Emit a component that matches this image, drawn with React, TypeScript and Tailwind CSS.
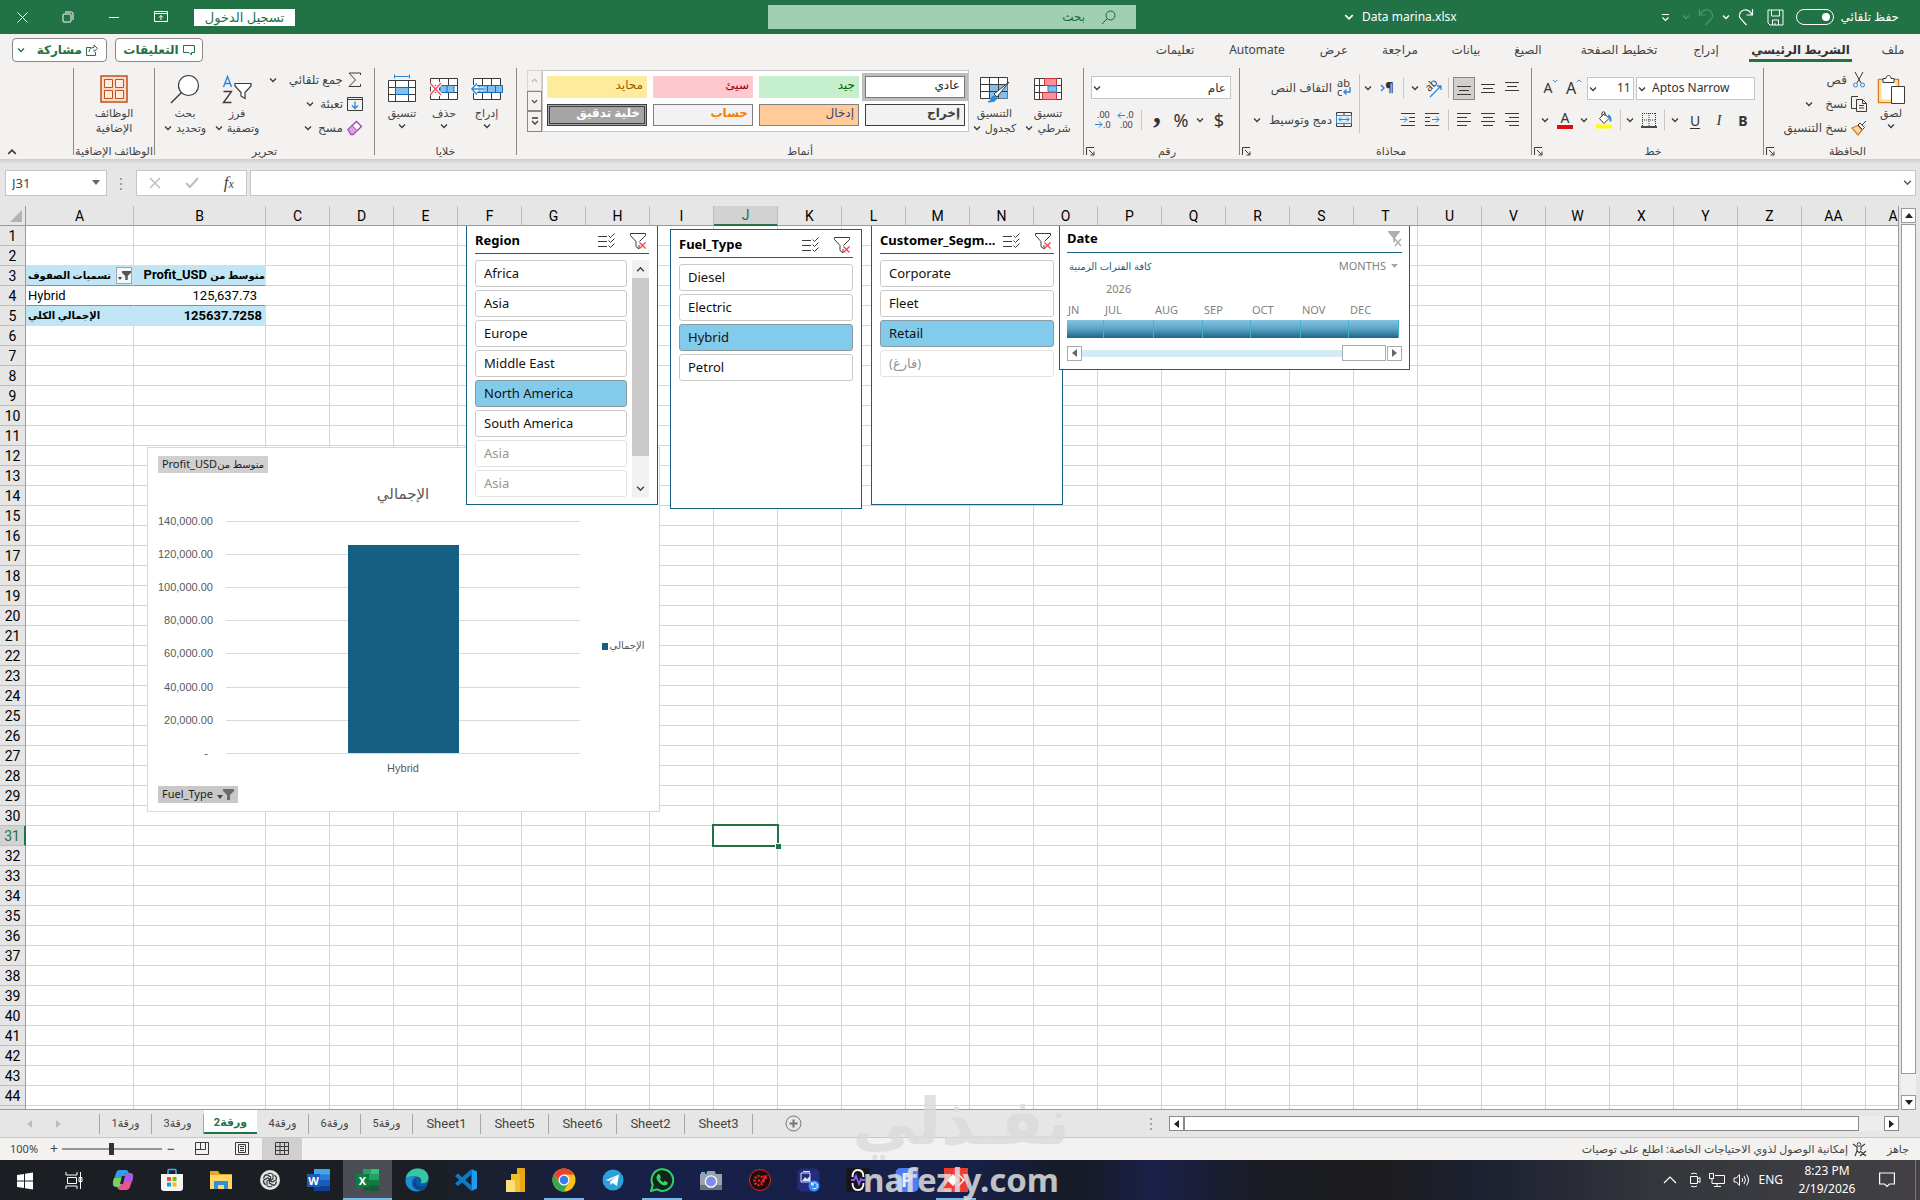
import React, { useState } from 'react';
import clsx from 'clsx';

const INK = '#3b3a39';
const BLUE = '#2b88d8';

interface IconProps {
  w?: number;
  h?: number;
  children: React.ReactNode;
}

function Icon({ w = 20, h = 20, children }: IconProps) {
  return (
    <svg width={w} height={h} viewBox={`0 0 ${w} ${h}`} fill="none" stroke={INK} strokeWidth="1" className="shrink-0 overflow-visible [direction:ltr]" aria-hidden="true">
      {children}
    </svg>
  );
}

function Chevron({ color = INK, size = 8, up = false }: { color?: string; size?: number; up?: boolean }) {
  return (
    <svg width={size} height={size} viewBox="0 0 8 8" fill="none" stroke={color} strokeWidth="1.3" className="shrink-0" aria-hidden="true">
      <path d={up ? 'M1 5.5 4 2.5 7 5.5' : 'M1 2.5 4 5.5 7 2.5'} />
    </svg>
  );
}

/* ---------- title bar ---------- */

function TitleBar() {
  const [autoSave, setAutoSave] = useState(false);

  return (
    <header dir="rtl" className="grid h-[34px] shrink-0 grid-cols-[784fr_368fr_768fr] items-center bg-[#217346] text-white">
      <div className="flex items-center pr-[21px]">
        <label htmlFor="autosave" className="w-[61px] text-[12px] leading-4 whitespace-nowrap">حفظ تلقائي</label>
        <span className="relative mr-1 flex h-4 w-[38px] items-center rounded-full border border-white">
          <input
            id="autosave"
            type="checkbox"
            checked={autoSave}
            onChange={(e) => setAutoSave(e.target.checked)}
            className="absolute inset-0 m-0 appearance-none"
          />
          <span className="mr-[3px] size-2 rounded-full bg-white" />
        </span>
        <button type="button" aria-label="Save" className="mr-3 flex w-[18px] justify-center">
          <svg width="17" height="17" viewBox="0 0 17 17" fill="none" stroke="#fff"><path d="M1 1h15v15H3l-2-2zM4.500 1v6h8V1M5.500 16v-5h6v5M8 16v-2" /></svg>
        </button>
        <button type="button" aria-label="Redo" className="mr-3 flex w-4 justify-center">
          <svg width="16" height="18" viewBox="0 0 16 18" fill="none" stroke="#fff" strokeWidth="1.2"><path d="M14.500 1v6h-6M14 6.500C12 3 9 1.500 6 2 2 3 .5 7 2 10l6.500 7" /></svg>
        </button>
        <span className="mr-2"><Chevron color="#fff" /></span>
        <button type="button" aria-label="Undo" className="mr-2 flex w-4 justify-center">
          <svg width="16" height="18" viewBox="0 0 16 18" fill="none" stroke="#4f9670" strokeWidth="1.200"><path d="M1.500 1v6h6M2 6.500C4 3 7 1.500 10 2c4 1 5.500 5 4 8l-6.500 7" /></svg>
        </button>
        <span className="mr-2"><Chevron color="#4f9670" /></span>
        <button type="button" aria-label="Customize" className="mr-3">
          <svg width="9" height="9" viewBox="0 0 9 9" fill="none" stroke="#fff" strokeWidth="1.200"><path d="M1 1.500h7M1.500 4.500l3 3 3-3" /></svg>
        </button>
        <div dir="ltr" className="mr-auto ml-[208px] flex items-center gap-2 text-[12px] whitespace-nowrap">
          <Chevron color="#fff" size={10} />
          Data marina.xlsx
        </div>
      </div>
      <div className="flex h-6 items-center bg-[#a0cfb2] pr-5">
        <svg width="15" height="15" viewBox="0 0 15 15" fill="none" stroke="#1d5c3a"><circle cx="9.500" cy="5.500" r="4.500" /><path d="M6.200 8.700 1 14" /></svg>
        <input aria-label="بحث" placeholder="بحث" className="mr-4 w-40 bg-transparent text-[12px] outline-none placeholder:text-[#1d6b40]" />
      </div>
      <div dir="ltr" className="flex items-center pl-4">
        <button type="button" aria-label="Close" className="flex w-[46px]">
          <svg width="13" height="13" viewBox="0 0 13 13" stroke="#fff"><path d="M1.500 1.500l10 10M11.500 1.500l-10 10" /></svg>
        </button>
        <button type="button" aria-label="Restore" className="flex w-[46px]">
          <svg width="12" height="12" viewBox="0 0 12 12" fill="none" stroke="#fff"><rect x="1" y="3" width="8" height="8" rx="1" /><path d="M3 1h6.500q1.500 0 1.500 1.500V9" /></svg>
        </button>
        <button type="button" aria-label="Minimize" className="flex w-[46px]">
          <svg width="12" height="12" viewBox="0 0 12 12" stroke="#fff"><path d="M1 6.500h10" /></svg>
        </button>
        <button type="button" aria-label="Ribbon display" className="flex w-10">
          <svg width="14" height="12" viewBox="0 0 14 12" fill="none" stroke="#fff"><path d="M.5.5h13v10H.5zM.5 2.500h13M7 9V4.500M5 6.500l2-2 2 2" /></svg>
        </button>
        <button type="button" dir="rtl" className="h-[17px] w-[101px] bg-white text-[13px] leading-[17px] text-[#217346]">تسجيل الدخول</button>
      </div>
    </header>
  );
}

/* ---------- ribbon ---------- */

const ribbonTabs = [
  { label: 'ملف', width: 'w-[54px]' },
  { label: 'الشريط الرئيسي', width: 'w-[131px]', active: true },
  { label: 'إدراج', width: 'w-[58px]' },
  { label: 'تخطيط الصفحة', width: 'w-[116px]' },
  { label: 'الصيغ', width: 'w-[66px]' },
  { label: 'بيانات', width: 'w-[58px]' },
  { label: 'مراجعة', width: 'w-[74px]' },
  { label: 'عرض', width: 'w-[58px]' },
  { label: 'Automate', width: 'w-[96px]' },
  { label: 'تعليمات', width: 'w-[68px]' },
];

function RibbonTabs() {
  return (
    <nav dir="rtl" className="flex h-8 shrink-0 items-center text-[12px] text-[#444]">
      {ribbonTabs.map((tab) => (
        <button key={tab.label} type="button" className={clsx('flex h-8 justify-center pt-[7px] leading-[18px] whitespace-nowrap', tab.width)}>
          <span className={clsx('h-[21px]', tab.active && 'border-b-3 border-[#217346] px-[2px] font-bold text-[#333]')}>{tab.label}</span>
        </button>
      ))}
      <div className="mr-auto ml-3 flex gap-2 text-[12px] font-bold text-[#217346]">
        <button type="button" className="flex h-6 w-[88px] items-center justify-center gap-1 rounded-[4px] border border-[#8a8886] bg-white">
          <svg width="12" height="12" viewBox="0 0 12 12" fill="none" stroke="#217346"><path d="M.5 1.500h11v7h-3v2.500L6 8.500H.5z" /></svg>
          التعليقات
        </button>
        <button type="button" className="flex h-6 w-[95px] items-center justify-between rounded-[4px] border border-[#8a8886] bg-white px-1">
          <span className="flex items-center gap-1 pr-1">
            <svg width="12" height="12" viewBox="0 0 12 12" fill="none" stroke="#217346"><path d="M5 3.500H.5v8h9V8M3 8c0-3 2-4.500 5-4.500V1l3.500 3.500L8 7.500V5.500" /></svg>
            مشاركة
          </span>
          <Chevron color="#217346" />
        </button>
      </div>
    </nav>
  );
}

interface GroupProps {
  label: string;
  width: string;
  launcher?: boolean;
  children: React.ReactNode;
}

function Group({ label, width, launcher, children }: GroupProps) {
  return (
    <>
      <section className={clsx('flex h-[91px] shrink-0 flex-col', width)}>
        <div className="flex h-[76px] items-start">{children}</div>
        <div className="flex h-4 items-center text-[11px] leading-4 text-[#444]">
          <span className="flex-1 text-center whitespace-nowrap">{label}</span>
          {launcher && (
            <button type="button" aria-label={label} className="w-[11px]">
              <Icon w={9} h={9}><path d="M.5 8V.5H8M3 3l5 5M8 4.500V8H4.500" /></Icon>
            </button>
          )}
        </div>
      </section>
      <div className="h-[87px] w-px shrink-0 bg-[#8a8886]" />
    </>
  );
}

function Cell({ w, label, children }: { w: string; label?: string; children: React.ReactNode }) {
  if (!label) return <span className={clsx('flex h-6 shrink-0 items-center justify-center', w)}>{children}</span>;
  return (
    <button type="button" aria-label={label} className={clsx('flex h-6 shrink-0 items-center justify-center', w)}>
      {children}
    </button>
  );
}

const Divider = () => <span className="h-5 w-px bg-[#c8c6c4]" />;

function Lines({ rows }: { rows: [number, number, number][] }) {
  return (
    <Icon w={16} h={16}>
      {rows.map(([x1, x2, y]) => <path key={y} d={`M${x1} ${y}.5H${x2}`} />)}
    </Icon>
  );
}

function BigButton({ icon, lines, width, chevron }: { icon: React.ReactNode; lines: string[]; width: string; chevron?: 'below' | 'inline' }) {
  return (
    <button type="button" className={clsx('flex shrink-0 flex-col items-center pt-1 text-[11px] leading-[15px] text-[#444]', width)}>
      <span className="flex h-[33px] items-center justify-center">{icon}</span>
      {lines.map((line, i) => (
        <span key={line} className="flex items-center gap-1 whitespace-nowrap">
          {line}
          {chevron === 'inline' && i === lines.length - 1 && <Chevron />}
        </span>
      ))}
      {chevron === 'below' && <span className="pt-[2px]"><Chevron /></span>}
    </button>
  );
}

function SmallButton({ icon, label, chevron }: { icon: React.ReactNode; label: string; chevron?: string }) {
  return (
    <button type="button" className="flex h-6 items-center text-[12px] whitespace-nowrap text-[#444]">
      <span className="flex w-[18px] justify-center">{icon}</span>
      <span className="mr-[3px]">{label}</span>
      {chevron && <span className={chevron}><Chevron /></span>}
    </button>
  );
}

function ClipboardGroup() {
  return (
    <Group label="الحافظة" width="w-[156px]" launcher>
      <BigButton
        width="mr-[10px] w-[38px]"
        chevron="below"
        lines={['لصق']}
        icon={
          <Icon w={28} h={30}>
            <path d="M1.500 5.500h20v23h-20z" fill="#fff" stroke="#d87f1c" strokeWidth="1.500" />
            <path d="M3.500 7.500h16v19h-16z" stroke="#fbdc9a" strokeWidth="2" />
            <path d="M6 8.500v-4h3c0-4 5-4 5 0h3v4z" fill="#fff" />
            <path d="M14.500 12.500h13v17h-13z" fill="#fff" />
          </Icon>
        }
      />
      <div className="mr-1 flex flex-col">
        <SmallButton
          label="قص"
          icon={<Icon w={14} h={16}><path d="M3 0l6 11M11 0L5 11" /><circle cx="3.500" cy="13" r="2" stroke={BLUE} /><circle cx="10.500" cy="13" r="2" stroke={BLUE} /></Icon>}
        />
        <SmallButton
          label="نسخ"
          chevron="mr-3"
          icon={<Icon w={16} h={16}><path d="M5 12.500H.5V.5H7M5.500 3.500h6l4 4v8h-10zM11.500 3.500v4h4M8 9.500h5M8 12h5" /></Icon>}
        />
        <SmallButton
          label="نسخ التنسيق"
          icon={<Icon w={16} h={16}><path d="M1 8l6-2.500 4 4.500-4 5z" fill="#fbd9a8" stroke="#d87f1c" strokeWidth="1.300" /><path d="M7 5l2-2 4.500 4.500-2 2zM11 5l4-4" fill="#fff" /></Icon>}
        />
      </div>
    </Group>
  );
}

function FontGroup() {
  return (
    <Group label="خط" width="w-[231px]" launcher>
      <div className="flex flex-col gap-2 pt-2 pr-2">
        <div className="flex items-center gap-[2px]">
          <div dir="ltr" className="relative h-[23px] w-[119px]">
            <select aria-label="Font" className="block h-full w-full appearance-none border border-[#c8c6c4] bg-white pl-[15px] text-[12px] text-[#333] outline-none">
              <option>Aptos Narrow</option>
            </select>
            <span className="pointer-events-none absolute top-2 left-[2px]"><Chevron /></span>
          </div>
          <div dir="ltr" className="relative h-[23px] w-[47px]">
            <select aria-label="Font size" className="block h-full w-full appearance-none border border-[#c8c6c4] bg-white pl-[29px] text-[12px] text-[#333] outline-none">
              <option>11</option>
            </select>
            <span className="pointer-events-none absolute top-2 left-[2px]"><Chevron /></span>
          </div>
          <div className="flex">
            <Cell w="w-[22px]" label="Increase font"><span dir="ltr" className="flex text-[16px] leading-5 text-[#333]">A<Chevron up size={6} color={BLUE} /></span></Cell>
            <Cell w="w-[24px]" label="Decrease font"><span dir="ltr" className="flex text-[14px] leading-5 text-[#333]">A<Chevron size={6} color={BLUE} /></span></Cell>
          </div>
        </div>
        <div className="flex items-center text-[14px] text-[#333]">
          <Cell w="w-6" label="Bold"><b>B</b></Cell>
          <Cell w="w-6" label="Italic"><i className="font-['Liberation_Serif'] text-[15px]">I</i></Cell>
          <Cell w="w-6" label="Underline"><span className="underline underline-offset-2">U</span></Cell>
          <Cell w="w-4"><Chevron /></Cell>
          <Cell w="w-[6px]"><Divider /></Cell>
          <Cell w="w-6" label="Borders">
            <Icon w={16} h={16}><path d="M1.500 1v13M8 1v13M14.500 1v13M1 1.500h14M1 8h14" strokeDasharray="1 1" /><path d="M0 15h16" strokeWidth="1.500" stroke="#111" /></Icon>
          </Cell>
          <Cell w="w-[14px]"><Chevron /></Cell>
          <Cell w="w-[6px]"><Divider /></Cell>
          <Cell w="w-[26px]" label="Fill color">
            <Icon w={16} h={18}><path d="M3.500 7.500l5-5 4.500 5-5 5zM6 5V1.500q1.500-1.500 3 0V5" fill="#fff" /><path d="M12 4.500q3 1 2.500 6" stroke={BLUE} strokeWidth="2" /><path d="M0 13.500h16v4H0z" fill="#ffff00" stroke="none" /></Icon>
          </Cell>
          <Cell w="w-[14px]"><Chevron /></Cell>
          <Cell w="w-6" label="Font color">
            <span className="flex w-4 flex-col items-center border-b-4 border-[#e00b0b] text-[14px] leading-[14px]">A</span>
          </Cell>
          <Cell w="w-4"><Chevron /></Cell>
        </div>
      </div>
    </Group>
  );
}

function AlignGroup() {
  return (
    <Group label="محاذاة" width="w-[291px]" launcher>
      <div className="flex w-[171px] flex-col gap-2 pt-2 pr-[7px]">
        <div className="flex items-center">
          <Cell w="w-6" label="Top align"><Lines rows={[[1, 15, 2], [3, 13, 6], [1, 15, 10]]} /></Cell>
          <Cell w="w-6" label="Middle align"><Lines rows={[[1, 15, 4], [3, 13, 8], [1, 15, 12]]} /></Cell>
          <button type="button" aria-label="Bottom align" className="mx-px flex h-[23px] w-[22px] items-center justify-center border border-[#8a8886] bg-[#d2d0ce]">
            <Lines rows={[[1, 15, 6], [3, 13, 10], [1, 15, 14]]} />
          </button>
          <Cell w="w-2"><Divider /></Cell>
          <Cell w="w-[22px]" label="Orientation">
            <Icon w={18} h={18}>
              <text x="3" y="10" transform="rotate(-45 8 9)" fontSize="11" fill={INK} stroke="none">ab</text>
              <path d="M6 18L17 7M17 11V7h-4" stroke={BLUE} strokeWidth="1.300" />
            </Icon>
          </Cell>
          <Cell w="w-[14px]"><Chevron /></Cell>
          <Cell w="w-[10px]"><Divider /></Cell>
          <Cell w="w-[22px]" label="Text direction">
            <span dir="ltr" className="flex items-center text-[13px] font-bold text-[#333]"><svg width="5" height="8" viewBox="0 0 5 8" fill="none" stroke={BLUE} strokeWidth="1.500"><path d="M1 1l3 3-3 3" /></svg>¶</span>
          </Cell>
          <Cell w="w-4"><Chevron /></Cell>
        </div>
        <div className="flex items-center">
          <Cell w="w-6" label="Align right"><Lines rows={[[1, 15, 1], [5, 15, 5], [1, 15, 9], [5, 15, 13]]} /></Cell>
          <Cell w="w-6" label="Center"><Lines rows={[[1, 15, 1], [3, 13, 5], [1, 15, 9], [3, 13, 13]]} /></Cell>
          <Cell w="w-6" label="Align left"><Lines rows={[[1, 15, 1], [1, 11, 5], [1, 15, 9], [1, 11, 13]]} /></Cell>
          <Cell w="w-2"><Divider /></Cell>
          <Cell w="w-6" label="Indent">
            <Icon w={16} h={16}><path d="M1 1.500h14M1 5.500h5M1 9.500h5M1 13.500h14" /><path d="M8 7.500h7M12 4.500l3 3-3 3" stroke={BLUE} /></Icon>
          </Cell>
          <Cell w="w-6" label="Outdent">
            <Icon w={16} h={16}><path d="M1 1.500h14M9 5.500h6M9 9.500h6M1 13.500h14" /><path d="M0 7.500h7M4 4.500l3 3-3 3" stroke={BLUE} /></Icon>
          </Cell>
        </div>
      </div>
      <span className="mt-[6px] h-[59px] w-px bg-[#c8c6c4]" />
      <div className="flex flex-col gap-2 pt-2 pr-[6px]">
        <SmallButton
          label="التفاف النص"
          icon={<Icon w={16} h={18}><text x="1" y="8" fontSize="11" fill={INK} stroke="none">ab</text><text x="1" y="17" fontSize="11" fill={INK} stroke="none">c</text><path d="M14 8v5H8M10.500 10.500L8 13l2.500 2.500" stroke={BLUE} strokeWidth="1.400" /></Icon>}
        />
        <SmallButton
          label="دمج وتوسيط"
          chevron="mr-2"
          icon={<Icon w={16} h={16}><path d="M.5.5h15v14H.5zM8 .5v3M8 11v3.500" /><path d="M.5 3.500h15v8H.5z" fill="#dcefff" stroke={BLUE} /><path d="M3 7.500h10M5 5.500l-2 2 2 2M11 5.500l2 2-2 2" stroke={BLUE} /></Icon>}
        />
      </div>
    </Group>
  );
}

function NumberGroup() {
  return (
    <Group label="رقم" width="w-[155px]" launcher>
      <div className="flex flex-col gap-2 pt-2 pr-2">
        <div className="relative h-6 w-[140px]">
          <select aria-label="Number format" className="block h-[23px] w-full appearance-none border border-[#c8c6c4] bg-white pr-1 text-[12px] text-[#333] outline-none">
            <option>عام</option>
          </select>
          <span className="pointer-events-none absolute top-2 left-[2px]"><Chevron /></span>
        </div>
        <div className="flex items-center text-[18px] leading-5 text-[#333]">
          <Cell w="w-6" label="Currency">$</Cell>
          <Cell w="w-[14px]"><Chevron /></Cell>
          <Cell w="w-6" label="Percent">%</Cell>
          <Cell w="w-6" label="Comma"><span className="pb-4 font-['Liberation_Serif'] text-[32px] font-bold">,</span></Cell>
          <Cell w="w-2"><Divider /></Cell>
          <Cell w="w-[22px]" label="Increase decimal">
            <Icon w={18} h={18}><text x="9" y="7" fontSize="9" fill={INK} stroke="none">.0</text><text x="3" y="17" fontSize="9" fill={INK} stroke="none">.00</text><path d="M8 4.500H1M4 1.500l-3 3 3 3" stroke={BLUE} /></Icon>
          </Cell>
          <Cell w="w-[25px]" label="Decrease decimal">
            <Icon w={18} h={18}><text x="3" y="7" fontSize="9" fill={INK} stroke="none">.00</text><text x="9" y="17" fontSize="9" fill={INK} stroke="none">.0</text><path d="M1 13.500h7M5 10.500l3 3-3 3" stroke={BLUE} /></Icon>
          </Cell>
        </div>
      </div>
    </Group>
  );
}

const cellStyles = [
  { label: 'عادي', cls: 'bg-white text-[#222] outline-3 outline-[#bdbdbd] border border-[#777] pb-1' },
  { label: 'جيد', cls: 'bg-[#c6efce] text-[#006100] pb-1' },
  { label: 'سيئ', cls: 'bg-[#ffc7ce] text-[#9c0006] pb-1' },
  { label: 'محايد', cls: 'bg-[#ffeb9c] text-[#9c5700] pb-1' },
  { label: 'إخراج', cls: 'bg-[#f2f2f2] text-[#3f3f3f] border border-[#3f3f3f] pb-1 font-bold' },
  { label: 'إدخال', cls: 'bg-[#ffcc99] text-[#3f3f76] border border-[#7f7f7f] pb-1' },
  { label: 'حساب', cls: 'bg-[#f2f2f2] text-[#fa7d00] border border-[#7f7f7f] pb-1 font-bold' },
  { label: 'خلية تدقيق', cls: 'bg-[#a5a5a5] text-white border-3 border-double border-[#3f3f3f] pb-1 font-bold' },
];

function StylesGroup() {
  return (
    <Group label="أنماط" width="w-[566px]">
      <BigButton
        width="mr-1 w-[62px]"
        chevron="inline"
        lines={['تنسيق', 'شرطي']}
        icon={
          <Icon w={28} h={24}>
            <path d="M.5 1.500h27v21H.5z" fill="#fff" /><path d="M.5 8.500h27M.5 15.500h27M5.500 1.500v21M22.500 1.500v21" />
            <path d="M10.500 1.500h12v7h-12zM8.500 15.500h14v7h-14z" fill="#ff8f95" stroke="#d13438" /><path d="M14 9h8.500v6H14z" fill="#83beec" stroke={BLUE} />
          </Icon>
        }
      />
      <BigButton
        width="w-[45px]"
        chevron="inline"
        lines={['التنسيق', 'كجدول']}
        icon={
          <Icon w={30} h={29}>
            <path d="M.5 3.500h27v21H.5z" fill="#fff" /><path d="M10 10h17.500v14.500H10z" fill="#83beec" stroke="none" /><path d="M.5 10.500h27M.5 17.500h27M9.500 3.500v21M18.500 3.500v21" />
            <path d="M29 8L17 23l-3-3z" fill="#fff" /><path d="M8 28q3-1 4-5 2-2 4 0 2 5-8 5z" fill={BLUE} stroke={BLUE} />
          </Icon>
        }
      />
      <div className="mr-auto ml-[10px] flex pt-[2px]">
        <div className="grid h-[62px] grid-cols-4 gap-x-[6px] gap-y-[6px] border border-[#c8c6c4] bg-white py-[5px] pr-[3px] pl-1">
          {cellStyles.map((s) => (
            <button key={s.label} type="button" className={clsx('flex h-[22px] w-[100px] items-center px-1 text-right text-[12px] leading-[14px]', s.cls)}>
              {s.label}
            </button>
          ))}
        </div>
        <div className="flex h-[62px] w-[15px] flex-col">
          <button type="button" aria-label="Scroll up" className="flex flex-1 items-center justify-center border border-[#d8d6d4]"><Chevron up color="#b5b3b1" size={7} /></button>
          <button type="button" aria-label="Scroll down" className="flex flex-1 items-center justify-center border border-[#8a8886]"><Chevron size={7} /></button>
          <button type="button" aria-label="More styles" className="flex flex-1 items-center justify-center border border-[#8a8886]">
            <Icon w={8} h={9}><path d="M1 1h6M1 4l3 3 3-3" strokeWidth="1.300" /></Icon>
          </button>
        </div>
      </div>
    </Group>
  );
}

function CellsGroup() {
  return (
    <Group label="خلايا" width="w-[141px]">
      <BigButton
        width="mr-[8px] w-[43px]"
        chevron="below"
        lines={['إدراج']}
        icon={
          <Icon w={32} h={24}>
            <path d="M2.500 1.500h27v21h-27z" fill="#fff" /><path d="M2.500 8.500h27M2.500 15.500h27M11.500 1.500v21M20.500 1.500v21" />
            <path d="M8 8.500h23.500v7H8z" fill="#83beec" stroke="#0f6cbd" /><path d="M16.500 8.500v7M24.500 8.500v7" stroke="#0f6cbd" /><path d="M13 12H1M6 6.500L.8 12 6 17.500" stroke="#fff" strokeWidth="3" /><path d="M13 12H1M6 6.500L.8 12 6 17.500" stroke={BLUE} strokeWidth="1.400" />
          </Icon>
        }
      />
      <BigButton
        width="w-[42px]"
        chevron="below"
        lines={['حذف']}
        icon={
          <Icon w={30} h={24}>
            <path d="M1.500 1.500h27v21h-27z" fill="#fff" /><path d="M1.500 8.500h27M1.500 15.500h27M10.500 1.500v21M19.500 1.500v21" />
            <path d="M11 8.500h14v7H11z" fill="#83beec" stroke="#0f6cbd" /><path d="M18 8.500v7" stroke="#0f6cbd" /><path d="M1 6l11 12M12 6L1 18" stroke="#fff" strokeWidth="4" /><path d="M1 6l11 12M12 6L1 18" stroke="#f0545a" strokeWidth="1.400" />
          </Icon>
        }
      />
      <BigButton
        width="w-[42px]"
        chevron="below"
        lines={['تنسيق']}
        icon={
          <Icon w={28} h={30}>
            <path d="M.5 6.500h27v21H.5z" fill="#fff" /><path d="M.5 13.500h27M.5 20.500h27M7.500 6.500v21M20.500 6.500v21" /><path d="M7.500 13.500h13v7h-13z" fill="#83beec" stroke="#0f6cbd" />
            <path d="M6.500 2.500h15M6.500.5v4M21.500.5v4" stroke={BLUE} />
          </Icon>
        }
      />
    </Group>
  );
}

function EditingGroup() {
  return (
    <Group label="تحرير" width="w-[219px]">
      <div className="mr-[10px] flex w-[99px] flex-col">
        <SmallButton label="جمع تلقائي" chevron="mr-3" icon={<Icon w={14} h={16}><path d="M12.500 3V1H1l6.500 7L1 14.500h11.500v-2.500" /></Icon>} />
        <SmallButton label="تعبئة" chevron="mr-[6px]" icon={<Icon w={16} h={14}><path d="M.5.5h15v13H.5zM.5 2.500h15" /><path d="M8 4.500v7M5 8.500l3 3 3-3" stroke={BLUE} strokeWidth="1.300" /></Icon>} />
        <SmallButton label="مسح" chevron="mr-[6px]" icon={<Icon w={16} h={16}><path d="M1 9.500l8.500-8 5 5-8.500 8H4z" fill="#fff" stroke="#a33fb5" strokeWidth="1.300" /><path d="M1 9.500l4-4 5 5-4 4H4z" fill="#d9a3e3" stroke="#a33fb5" /></Icon>} />
      </div>
      <BigButton
        width="w-[56px]"
        chevron="inline"
        lines={['فرز', 'وتصفية']}
        icon={
          <Icon w={30} h={30}>
            <path d="M1.500 13L5.500 2.500 9.500 13M3 9.500h5" stroke={BLUE} strokeWidth="1.400" /><path d="M1.500 17.500h8L1.500 28.500h8" strokeWidth="1.400" />
            <path d="M13 9.500h16v2.500l-6 6.500v6l-4-2.500v-3.500L13 12z" fill="#fff" strokeWidth="1.200" />
          </Icon>
        }
      />
      <BigButton
        width="w-[48px]"
        chevron="inline"
        lines={['بحث', 'وتحديد']}
        icon={<Icon w={30} h={30}><circle cx="18.500" cy="11.500" r="10" fill="#fff" strokeWidth="1.200" /><path d="M11.500 18.500L1 29" strokeWidth="1.400" /></Icon>}
      />
    </Group>
  );
}

function Ribbon() {
  return (
    <div dir="rtl" className="flex h-[93px] shrink-0 pt-[2px]">
      <ClipboardGroup />
      <FontGroup />
      <AlignGroup />
      <NumberGroup />
      <StylesGroup />
      <CellsGroup />
      <EditingGroup />
      <Group label="الوظائف الإضافية" width="w-[80px]">
        <BigButton
          width="w-[80px]"
          lines={['الوظائف', 'الإضافية']}
          icon={
            <Icon w={28} h={28}>
              <path d="M1 1h26v26H1z" fill="#fbdcc4" stroke="#c0501d" strokeWidth="1.500" />
              <path d="M4.500 4.500h8v8h-8zM15.500 4.500h8v8h-8zM4.500 15.500h8v8h-8zM15.500 15.500h8v8h-8z" fill="#fdebdf" stroke="#c0501d" />
            </Icon>
          }
        />
      </Group>
      <button type="button" aria-label="Collapse ribbon" className="mt-auto mr-auto mb-[2px] ml-[7px]"><Chevron up size={10} /></button>
    </div>
  );
}

/* ---------- formula bar ---------- */

function FormulaBar() {
  return (
    <div className="flex h-[47px] shrink-0 items-start border-t border-[#d0cecc] bg-[#e6e6e6] pt-[10px] pr-1 pl-[5px] shadow-[inset_0_4px_4px_-3px_#c8c8c8]">
      <div className="relative h-[26px] w-[102px]">
        <input aria-label="Name box" defaultValue="J31" className="block h-full w-full border border-[#c6c6c6] bg-white pl-[6px] text-[13px] text-[#444] outline-none" />
        <svg width="8" height="5" viewBox="0 0 8 5" className="absolute top-[10px] right-[7px]"><path d="M0 0h8L4 5z" fill="#666" /></svg>
      </div>
      <svg width="3" height="12" viewBox="0 0 3 12" className="mx-[13px] mt-2" fill="#a0a0a0"><path d="M0 0h2v2H0zM0 5h2v2H0zM0 10h2v2H0z" /></svg>
      <div className="flex h-[26px] w-[111px] items-center justify-around border border-[#c6c6c6] bg-white">
        <button type="button" aria-label="Cancel"><svg width="12" height="12" viewBox="0 0 12 12" stroke="#bdbdbd" strokeWidth="1.500"><path d="M1 1l10 10M11 1L1 11" /></svg></button>
        <button type="button" aria-label="Enter"><svg width="14" height="12" viewBox="0 0 14 12" fill="none" stroke="#bdbdbd" strokeWidth="2"><path d="M1 6l4 4 8-9" /></svg></button>
        <button type="button" className="font-['Liberation_Serif'] text-[17px] leading-5 text-[#444] italic">f<span className="text-[12px]">x</span></button>
      </div>
      <div className="relative ml-[3px] h-[26px] flex-1">
        <input aria-label="Formula" className="block h-full w-full border border-[#c6c6c6] bg-white outline-none" />
        <span className="absolute top-2 right-1"><Chevron color="#555" size={9} /></span>
      </div>
    </div>
  );
}

/* ---------- sheet ---------- */

const columns = [...'ABCDEFGHIJKLMNOPQRSTUVWXYZ', 'AA', 'AB'];
const rowNumbers = Array.from({ length: 45 }, (_, i) => i + 1);

function FunnelIcon({ color = '#555', size = 11 }: { color?: string; size?: number }) {
  return <svg width={size} height={size} viewBox="0 0 11 11" fill={color} aria-hidden="true"><path d="M0 0h11v2L7 6v5H4V6L0 2z" /></svg>;
}

function cellContent(row: number, col: string) {
  const key = `${col}${row}`;
  if (key === 'A3') {
    return (
      <div className="flex items-center justify-between pl-[2px] font-bold">
        <span className="text-[10px]">تسميات الصفوف</span>
        <button type="button" aria-label="Filter" className="mr-px flex h-[17px] w-4 items-end justify-center border border-[#a6a6a6] bg-[#f4f6fa] pb-[3px]">
          <svg width="4" height="3" viewBox="0 0 4 3"><path d="M0 0h4L2 3z" fill="#444" /></svg>
          <FunnelIcon size={9} />
        </button>
      </div>
    );
  }
  if (key === 'B3') return <div className="text-right text-[13px] font-bold" dir="rtl"><span className="text-[10px]">متوسط من</span> Profit_USD</div>;
  if (key === 'A4') return <div className="pl-[2px] text-[13px]">Hybrid</div>;
  if (key === 'B4') return <div className="pr-2 text-right text-[13px]">125,637.73</div>;
  if (key === 'A5') return <div className="pl-[2px] text-[10px] font-bold">الإجمالي الكلي</div>;
  if (key === 'B5') return <div className="pr-[3px] text-right text-[13px] font-bold">125637.7258</div>;
  return null;
}

function cellClass(row: number, col: string) {
  const plain = 'bg-white border-[#d4d4d4]';
  if (col !== 'A' && col !== 'B') return plain;
  if (row === 2) return 'bg-white border-r-[#d4d4d4] border-b-[#c0e6f5]';
  if (row === 3) return 'bg-[#c0e6f5] border-r-[#c0e6f5] border-b-[#44a5d6]';
  if (row === 4) return 'bg-white border-r-white border-b-[#44a5d6]';
  if (row === 5) return 'bg-[#c0e6f5] border-[#c0e6f5]';
  return plain;
}

function SheetTable() {
  return (
    <table className="w-[1930px] table-fixed border-separate border-spacing-0 font-['Roboto','DejaVu_Sans',sans-serif] text-[14px] leading-[18px] text-black">
      <colgroup>
        <col className="w-[26px]" />
        {columns.map((c) => (
          <col key={c} className={c === 'A' ? 'w-[108px]' : c === 'B' ? 'w-[132px]' : 'w-[64px]'} />
        ))}
      </colgroup>
      <thead>
        <tr className="h-5">
          <th className="border-r border-b border-[#9a9a9a] bg-[#e6e6e6] p-0">
            <svg width="12" height="12" viewBox="0 0 12 12" className="mr-[3px] ml-auto"><path d="M12 0v12H0z" fill="#b4b4b4" /></svg>
          </th>
          {columns.map((c) => (
            <th
              key={c}
              className={clsx(
                'overflow-hidden border-r border-b border-r-[#bdbdbd] p-0 font-normal',
                c === 'J' ? 'border-b-2 border-b-[#217346] bg-[#d2d2d2] text-[#217346]' : 'border-b-[#9a9a9a] bg-[#e6e6e6]'
              )}
            >
              {c}
            </th>
          ))}
        </tr>
      </thead>
      <tbody>
        {rowNumbers.map((r) => (
          <tr key={r} className="h-5">
            <th
              className={clsx(
                'border-r border-b border-b-[#bdbdbd] p-0 font-normal',
                r === 31 ? 'border-r-2 border-r-[#217346] bg-[#d2d2d2] text-[#217346]' : 'border-r-[#9a9a9a] bg-[#e6e6e6]'
              )}
            >
              {r}
            </th>
            {columns.map((c) => (
              <td key={c} className={clsx('h-5 overflow-visible border-r border-b p-0 whitespace-nowrap', cellClass(r, c))}>
                {cellContent(r, c)}
              </td>
            ))}
          </tr>
        ))}
      </tbody>
    </table>
  );
}

interface SlicerItem {
  label: string;
  selected?: boolean;
  empty?: boolean;
}

function Slicer({ title, items, className, scroll }: { title: string; items: SlicerItem[]; className: string; scroll?: boolean }) {
  return (
    <section className={clsx("absolute flex h-[280px] w-48 flex-col border border-[#156082] bg-white px-2 pt-[3px] font-['Noto_Sans','DejaVu_Sans',sans-serif] text-[13px]", className)}>
      <div className="flex h-[25px] shrink-0 items-center border-b border-[#156082]">
        <h2 className="flex-1 text-[13px] font-bold whitespace-nowrap text-black">{title}</h2>
        <button type="button" aria-label="Multi-select" className="mr-[15px] ml-2">
          <Icon w={17} h={16}><path d="M0 3.500h9M0 8.500h9M0 13.500h9M10.500 2.500l2 2 4-4M10.500 7.500l2 2 4-4M10.500 12.500l2 2 4-4" /></Icon>
        </button>
        <button type="button" aria-label="Clear filter" className="mr-[3px]">
          <Icon w={16} h={17}><path d="M.5.5h15v2l-6 6M.5 2.500l5.500 6v5l3 2.500v-4M.5.5v2" /><path d="M9.500 9.500l6 6M15.500 9.500l-6 6" stroke="#e8474c" strokeWidth="1.300" /></Icon>
        </button>
      </div>
      <div className="flex min-h-0 flex-1 gap-[5px] pt-[6px]">
        <div className="flex flex-1 flex-col gap-[3px]">
          {items.map((item, i) => (
            <button
              key={i}
              type="button"
              className={clsx(
                'h-[27px] rounded-[3px] border pl-2 text-left leading-[25px]',
                item.selected ? 'border-[#8a9aa3] bg-[#83cbeb] text-[#111]' : item.empty ? 'border-[#e3e3e3] text-[#959595]' : 'border-[#c9c9c9] text-[#111]'
              )}
            >
              {item.label}
            </button>
          ))}
        </div>
        {scroll && (
          <div className="mb-[6px] flex w-[17px] flex-col items-center justify-between bg-[#f1f1f1] py-[5px]">
            <Chevron up size={9} color="#444" />
            <div className="h-[178px] w-full bg-[#c9c9c9]" />
            <span className="pt-6"><Chevron size={9} color="#444" /></span>
          </div>
        )}
      </div>
    </section>
  );
}

const months = [
  { label: 'JN', width: 'w-[37px]' },
  { label: 'JUL', width: 'w-[50px]' },
  { label: 'AUG', width: 'w-[49px]' },
  { label: 'SEP', width: 'w-[48px]' },
  { label: 'OCT', width: 'w-[50px]' },
  { label: 'NOV', width: 'w-[48px]' },
  { label: 'DEC', width: 'w-[50px]' },
];

function Timeline() {
  return (
    <section className="absolute -top-px left-[1059px] flex h-[145px] w-[351px] flex-col border border-[#156082] bg-white px-[7px] font-['Noto_Sans','DejaVu_Sans',sans-serif] text-[11px] text-[#7f7f7f]">
      <div className="flex h-[27px] items-center justify-between border-b border-[#156082]">
        <h2 className="text-[13px] font-bold text-black">Date</h2>
        <svg width="14" height="16" viewBox="0 0 14 16" fill="#b0b0b0"><path d="M0 0h12v1L7 7v5L5 10V7L0 1z" /><path d="M7 8l6 7M13 8l-6 7" stroke="#b0b0b0" strokeWidth="1.500" /></svg>
      </div>
      <div className="flex h-[26px] items-center justify-between pr-1 pl-[2px]">
        <span dir="rtl" className="text-[10px] text-[#156082]">كافة الفترات الزمنية</span>
        <button type="button" className="flex items-center gap-[5px]">
          MONTHS
          <svg width="7" height="4" viewBox="0 0 7 4"><path d="M0 0h7L3.500 4z" fill="#a6a6a6" /></svg>
        </button>
      </div>
      <div className="h-5 pl-[39px] leading-5">2026</div>
      <div className="flex h-[21px] items-center">
        {months.map((m) => <span key={m.label} className={clsx('pt-px pl-px', m.width)}>{m.label}</span>)}
      </div>
      <div className="flex h-[18px] w-[332px] bg-linear-to-b from-[#83c5e2] via-[#5aa3c4] to-[#1c6688]">
        {months.map((m) => <span key={m.label} className={clsx('border-r border-[#45b0d0]', m.width)} />)}
      </div>
      <div className="mt-[7px] flex items-center">
        <button type="button" aria-label="Earlier" className="flex size-[15px] items-center justify-center border border-[#ababab]"><svg width="5" height="8" viewBox="0 0 5 8"><path d="M5 0v8L0 4z" fill="#666" /></svg></button>
        <div className="h-[7px] flex-1 bg-[#d3ebf5]" />
        <div className="mr-px h-4 w-11 border border-[#ababab] bg-white" />
        <button type="button" aria-label="Later" className="flex size-[15px] items-center justify-center border border-[#ababab]"><svg width="5" height="8" viewBox="0 0 5 8"><path d="M0 0v8l5-4z" fill="#666" /></svg></button>
      </div>
    </section>
  );
}

const axis = ['140,000.00', '120,000.00', '100,000.00', '80,000.00', '60,000.00', '40,000.00', '20,000.00', '-'];

function PivotChart() {
  return (
    <section className="absolute top-[221px] left-[147px] h-[365px] w-[513px] border border-[#d9d9d9] bg-white font-['Noto_Sans','DejaVu_Sans',sans-serif]">
      <svg width="511" height="363" viewBox="0 0 511 363" className="font-['Liberation_Sans','DejaVu_Sans',sans-serif]" fill="#595959" fontSize="11">
        <text x="255" y="51" fontSize="15" textAnchor="middle">الإجمالي</text>
        {axis.map((label, i) => (
          <g key={label}>
            <text x={label === '-' ? 60 : 65} y={77 + i * 33.1} textAnchor="end">{label}</text>
            <path d={`M78 ${Math.round(73 + i * 33.1)}.5H432`} stroke="#d9d9d9" />
          </g>
        ))}
        <rect x="200" y="97" width="111" height="208" fill="#156082" />
        <text x="255" y="324" textAnchor="middle">Hybrid</text>
        <rect x="454" y="195" width="6" height="7" fill="#156082" />
        <text x="479" y="201" fontSize="10" textAnchor="middle">الإجمالي</text>
      </svg>
      <button type="button" dir="rtl" className="absolute top-2 left-[10px] flex h-[17px] w-[110px] items-center justify-center bg-[#d0d0d0] text-[10px] whitespace-nowrap text-[#222]">
        متوسط من<span className="text-[11px]">Profit_USD</span>
      </button>
      <button type="button" className="absolute bottom-2 left-[10px] flex h-[17px] w-20 items-center justify-center bg-[#c8c8c8] text-[11px] text-[#222]">
        Fuel_Type
        <svg width="6" height="4" viewBox="0 0 6 4" className="mt-1 ml-1"><path d="M0 0h6L3 4z" fill="#444" /></svg>
        <FunnelIcon color="#6b6b6b" />
      </button>
    </section>
  );
}

function Sheet() {
  return (
    <main className="flex min-h-0 flex-1 bg-[#e6e6e6]">
      <div className="relative min-w-0 flex-1 overflow-hidden border-r border-b border-[#9a9a9a]">
        <SheetTable />
        <div className="absolute inset-x-0 top-5 bottom-0 overflow-hidden">
          <PivotChart />
          <div className="absolute top-[598px] left-[712px] h-[23px] w-[67px] border-2 border-[#217346]">
            <span className="absolute -right-1 -bottom-1 size-[6px] border-t border-l border-white bg-[#217346]" />
          </div>
          <Slicer
            title="Region"
            className="-top-px left-[466px]"
            scroll
            items={[
              { label: 'Africa' },
              { label: 'Asia' },
              { label: 'Europe' },
              { label: 'Middle East' },
              { label: 'North America', selected: true },
              { label: 'South America' },
              { label: 'Asia', empty: true },
              { label: 'Asia', empty: true },
            ]}
          />
          <Slicer
            title="Fuel_Type"
            className="top-[3px] left-[670px]"
            items={[{ label: 'Diesel' }, { label: 'Electric' }, { label: 'Hybrid', selected: true }, { label: 'Petrol' }]}
          />
          <Slicer
            title="Customer_Segm..."
            className="-top-px left-[871px]"
            items={[{ label: 'Corporate' }, { label: 'Fleet' }, { label: 'Retail', selected: true }, { label: '(فارغ)', empty: true }]}
          />
          <Timeline />
        </div>
      </div>
      <div className="mt-[2px] flex w-[21px] flex-col pr-1 pl-[2px]">
        <button type="button" aria-label="Up" className="flex h-[15px] items-center justify-center border border-[#9a9a9a] bg-white"><svg width="8" height="5" viewBox="0 0 8 5"><path d="M4 0l4 5H0z" fill="#222" /></svg></button>
        <div className="mt-px flex-1 border border-[#9a9a9a] bg-white" />
        <div className="h-[21px] bg-[#f0f0f0]" />
        <button type="button" aria-label="Down" className="flex h-[15px] items-center justify-center border border-[#9a9a9a] bg-white"><svg width="8" height="5" viewBox="0 0 8 5"><path d="M0 0h8L4 5z" fill="#222" /></svg></button>
      </div>
    </main>
  );
}

const sheetTabs = [
  { label: 'ورقة1', width: 'w-[52px]' },
  { label: 'ورقة3', width: 'w-[52px]' },
  { label: 'ورقة2', width: 'w-[53px]' },
  { label: 'ورقة4', width: 'w-[52px]' },
  { label: 'ورقة6', width: 'w-[52px]' },
  { label: 'ورقة5', width: 'w-[52px]' },
  { label: 'Sheet1', width: 'w-[68px]' },
  { label: 'Sheet5', width: 'w-[68px]' },
  { label: 'Sheet6', width: 'w-[68px]' },
  { label: 'Sheet2', width: 'w-[68px]' },
  { label: 'Sheet3', width: 'w-[68px]' },
];

function SheetTabs() {
  const [active, setActive] = useState('ورقة2');

  return (
    <div className="flex h-7 shrink-0 items-start border-b border-[#c6c6c6] bg-[#e6e6e6] text-[#444]">
      <div className="mt-1 flex h-5 w-[100px] items-center gap-6 border-r border-[#a6a6a6] pl-[27px]">
        <svg width="5" height="8" viewBox="0 0 5 8"><path d="M5 0v8L0 4z" fill="#bdbdbd" /></svg>
        <svg width="5" height="8" viewBox="0 0 5 8"><path d="M0 0v8l5-4z" fill="#bdbdbd" /></svg>
      </div>
      {sheetTabs.map((tab) => {
        const isArabic = !tab.label.startsWith('Sheet');
        return (
          <button
            key={tab.label}
            type="button"
            dir={isArabic ? 'rtl' : 'ltr'}
            onClick={() => setActive(tab.label)}
            className={clsx(
              "flex shrink-0 items-center justify-center font-['Roboto','DejaVu_Sans',sans-serif] whitespace-nowrap",
              tab.width,
              isArabic ? 'text-[11px]' : 'text-[13px]',
              active === tab.label ? 'h-6 border-b-2 border-[#217346] bg-white pt-1 font-bold text-[#217346]' : 'mt-1 h-5 border-r border-[#a6a6a6]'
            )}
          >
            {tab.label}
          </button>
        );
      })}
      <button type="button" aria-label="New sheet" className="mt-[5px] ml-8">
        <svg width="17" height="17" viewBox="0 0 17 17" fill="none" stroke="#777"><circle cx="8.500" cy="8.500" r="7.500" /><path d="M8.500 4.500v8M4.500 8.500h8" strokeWidth="2" /></svg>
      </button>
      <svg width="3" height="12" viewBox="0 0 3 12" className="mt-2 mr-4 ml-auto" fill="#a0a0a0"><path d="M0 0h2v2H0zM0 5h2v2H0zM0 10h2v2H0z" /></svg>
      <div className="mt-[6px] mr-[21px] flex h-[15px] w-[38%]">
        <button type="button" aria-label="Left" className="flex w-[15px] items-center justify-center border border-[#8a8a8a] bg-white"><svg width="5" height="8" viewBox="0 0 5 8"><path d="M5 0v8L0 4z" fill="#222" /></svg></button>
        <div className="flex-1 border border-[#8a8a8a] bg-white" />
        <div className="w-[25px] bg-[#ededed]" />
        <button type="button" aria-label="Right" className="flex w-[15px] items-center justify-center border border-[#8a8a8a] bg-white"><svg width="5" height="8" viewBox="0 0 5 8"><path d="M0 0v8l5-4z" fill="#222" /></svg></button>
      </div>
    </div>
  );
}

function StatusBar() {
  return (
    <footer className="flex h-[22px] shrink-0 items-center bg-[#f3f2f1] text-[11px] text-[#444]">
      <span className="w-[46px] pl-[10px]">100%</span>
      <span className="w-4 text-center text-[14px] leading-4">+</span>
      <input
        type="range"
        aria-label="Zoom"
        defaultValue={49}
        className="h-3 w-[100px] appearance-none bg-linear-to-b from-transparent from-40% via-[#555] via-50% to-transparent to-60% [&::-webkit-slider-thumb]:h-3 [&::-webkit-slider-thumb]:w-[5px] [&::-webkit-slider-thumb]:appearance-none [&::-webkit-slider-thumb]:bg-[#333]"
      />
      <span className="w-[18px] text-center text-[14px] leading-4">−</span>
      <button type="button" aria-label="Page break" className="ml-[2px] flex h-full w-10 items-center justify-center">
        <Icon w={14} h={14}><path d="M.5.5h13v12H.5zM5.500.5v7M10.500.5v7h-10" /></Icon>
      </button>
      <button type="button" aria-label="Page layout" className="flex h-full w-10 items-center justify-center">
        <Icon w={14} h={14}><path d="M.5.5h13v12H.5zM3.500 2.500h7v8h-7zM5 4.500h4M5 6.500h4M5 8.500h4" /></Icon>
      </button>
      <button type="button" aria-label="Normal" className="flex h-full w-10 items-center justify-center bg-[#d2d0ce]">
        <Icon w={14} h={14}><path d="M.5.5h13v12H.5zM5 .5v12M9.500.5v12M.5 4.500h13M.5 8.500h13" /></Icon>
      </button>
      <div dir="rtl" className="flex flex-1 items-center pr-[11px] whitespace-nowrap">
        <span className="w-[32px]">جاهز</span>
        <span className="mr-[10px]">
          <Icon w={15} h={15}><circle cx="7" cy="2.500" r="1.800" /><path d="M1 2l4 3v4l-2 5M13 2L9 5v3M5 9l3 2M8 9l6 5M14 9l-6 5" strokeWidth="1.200" /></Icon>
        </span>
        <span className="mr-1">إمكانية الوصول لذوي الاحتياجات الخاصة: اطلع على توصيات</span>
      </div>
    </footer>
  );
}

/* ---------- taskbar ---------- */

const apps: { name: string; active?: boolean; open?: boolean; icon: React.ReactNode }[] = [
  { name: 'Start', icon: <path d="M4 7l7-1v6.500H4zM12 5.800L20 4.500v8h-8zM4 13.500h7V20l-7-1zM12 13.500h8v8l-8-1.300z" fill="#fff" /> },
  { name: 'Task view', icon: <path d="M4 4v3h11V4M5.500 9.500h9v6h-9zM4 21v-3h11v3M18.500 4v17M17 9.500h3v4h-3z" fill="none" stroke="#fff" /> },
  {
    name: 'Copilot',
    icon: (
      <>
        <path d="M8 2h7q2 0 3 3l-4 1-3 10q-1 3-4 3H4Q1 18 2 14L5 5q1-3 3-3z" fill="#2f9fe8" />
        <path d="M2 14q0 4 3 5h4l3-9H3z" fill="#7fcf5a" />
        <path d="M16 22H9q-2 0-3-3l4-1 3-10q1-3 4-3h3q3 1 2 5l-3 9q-1 3-3 3z" fill="#e8568f" />
        <path d="M22 10q0-4-3-5h-4l-3 9h9z" fill="#a35be8" /><path d="M11 8h3l-2 8H9z" fill="#20242a" />
      </>
    ),
  },
  {
    name: 'Store',
    icon: (
      <>
        <path d="M8 6V2.500q0-1 1-1h6q1 0 1 1V6" fill="none" stroke="#36b5f0" strokeWidth="1.500" /><path d="M1 6h22v14q0 3-3 3H4q-3 0-3-3z" fill="#f5f5f5" />
        <path d="M7 9h4v4H7z" fill="#f05021" /><path d="M12.500 9h4v4h-4z" fill="#7fba00" /><path d="M7 14.500h4v4H7z" fill="#00a4ef" /><path d="M12.500 14.500h4v4h-4z" fill="#ffb900" />
      </>
    ),
  },
  { name: 'Explorer', icon: <><path d="M1 3h8l2 3h12v15H1z" fill="#e8a820" /><path d="M1 7h22v14H1z" fill="#ffd667" /><path d="M5 21v-7q0-1 1-1h12q1 0 1 1v7h-4v-4H9v4z" fill="#2f8fd8" /></> },
  {
    name: 'ChatGPT',
    icon: (
      <>
        <circle cx="12" cy="12" r="10" fill="#e4e4e4" />
        <g fill="none" stroke="#333" strokeWidth="1.100">
          {[0, 60, 120, 180, 240, 300].map((a) => <path key={a} d="M10 5.800q3-1.500 5 .7v4.500L12 12.800" transform={`rotate(${a} 12 12)`} />)}
        </g>
      </>
    ),
  },
  { name: 'Word', icon: <><path d="M7 1h15q1 0 1 1v20q0 1-1 1H7z" fill="#41a5ee" /><path d="M7 6.500h16V12H7z" fill="#2b7cd3" /><path d="M7 12h16v5.500H7z" fill="#185abd" /><path d="M7 17.500h16V23H7z" fill="#103f91" /><path d="M0 6h13v13H0z" fill="#185abd" /><text x="6.500" y="16.500" fontSize="11" fontWeight="700" textAnchor="middle" fill="#fff">W</text></> },
  { name: 'Excel', active: true, icon: <><path d="M7 1h8v11H7z" fill="#21a366" /><path d="M15 1h8v5.500h-8z" fill="#33c481" /><path d="M15 6.500h8V12h-8z" fill="#21a366" /><path d="M7 12h16v5.500H7z" fill="#107c41" /><path d="M7 17.500h16V23H7z" fill="#185c37" /><path d="M0 6h13v13H0z" fill="#107c41" /><text x="6.500" y="16.500" fontSize="11" fontWeight="700" textAnchor="middle" fill="#fff">X</text></> },
  { name: 'Edge', icon: <><circle cx="12" cy="12" r="11.500" fill="#0c59a4" /><path d="M.5 11C2 3 8 .5 13 .5c7 0 11 5 10.500 10-.3 4-4 5.500-8 4.500 2-2 1-6-4-6.500C6 8 2 9 .5 11z" fill="#36c6a0" /><path d="M.5 12C3 8 8 7.500 11 9c-4 1-5 5-3.500 8.500 1 3 4 5 8.500 5C8 25 0 20 .5 12z" fill="#1b8fd8" /><path d="M11.500 11q-2 3 0 6 4 3 9.500.5-3 4-7.500 4-5-2-5-6 0-3 3-4.500z" fill="#14223f" opacity=".35" /></> },
  { name: 'VS Code', icon: <><path d="M17.500 1L23 3.500v17L17.500 23z" fill="#1f9cf0" /><path d="M17.500 1v5.500L4 18l-3-2.500zM1 8l3-2.500 13.500 12V23z" fill="#0a7cc9" /></> },
  { name: 'Power BI', icon: <><path d="M14 0h7q1 0 1 1v23h-8z" fill="#e6a817" /><path d="M8 6h8q1 0 1 1v17H8z" fill="#f2c02c" /><path d="M3 12h7q2 0 2 2v10H3z" fill="#fbdf7a" /></> },
  { name: 'Chrome', open: true, icon: <><circle cx="12" cy="12" r="11.500" fill="#fbc116" /><path d="M2 6.200A11.500 11.500 0 0 1 22 6.500H12L7.500 15z" fill="#ea4335" /><path d="M2 6.200A11.500 11.500 0 0 0 11.500 23.500L16.500 15 7 14.500z" fill="#31a852" /><circle cx="12" cy="12" r="5.500" fill="#fff" /><circle cx="12" cy="12" r="4.300" fill="#3a7cec" /></> },
  { name: 'Telegram', icon: <><circle cx="12" cy="12" r="10.500" fill="#2aa1da" /><path d="M5 12l13-5.500L16 18l-4.500-3-2 2-.5-3.500L15 9l-7.500 4z" fill="#fff" /></> },
  { name: 'WhatsApp', open: true, icon: <><path d="M1 23l1.800-6A10.800 10.800 0 1 1 7 21.400z" fill="#13241c" stroke="#2fd366" strokeWidth="2" /><path d="M7.500 6.500l2-.5 1.500 3.500-1.200 1.500q1.200 2.300 3.500 3.300l1.500-1.500 3 1.600q0 3-3.300 3-5.500-.9-8-6.900-.3-2.500 1-4z" fill="#2fd366" /></> },
  { name: 'Camera', icon: <><path d="M1 6h6l1.500-3h7L17 6h6v16H1z" fill="#9aa3ad" /><path d="M1 17h22v5H1z" fill="#6d757e" /><path d="M2 4h4v2H2z" fill="#3fc1f0" /><circle cx="12" cy="13.500" r="6.300" fill="#fff" /><circle cx="12" cy="13.500" r="5" fill="#7d8cf0" /></> },
  { name: 'Recorder', icon: <><circle cx="12" cy="12" r="10.500" fill="#200c0f" stroke="#e52424" /><circle cx="11" cy="12.500" r="4.500" fill="none" stroke="#e52424" strokeWidth="2.500" strokeDasharray="2 1.200" /><circle cx="11" cy="12.500" r="1.300" fill="#e52424" /><path d="M13 15l5-7-3 .5M18 8v3" stroke="#e52424" strokeWidth="1.500" fill="none" /></> },
  { name: 'Recovery', icon: <><rect x=".5" y=".5" width="22" height="23" rx="5" fill="#262c7c" /><path d="M4 5h9v9H4zM6 3.500h7" fill="none" stroke="#dfe3ff" /><path d="M5 13l3-4 2 2 3-3v5z" fill="#dfe3ff" /><circle cx="17" cy="18" r="5.500" fill="#2f8bf5" /><path d="M14.500 17a3 3 0 1 1 1 3.200M14.500 14.500V17H17" stroke="#fff" fill="none" /></> },
  { name: 'Voice', icon: <><rect width="24" height="24" rx="4" fill="#17171a" /><path d="M6.500 9q0-7 5.500-7t5.500 7M6.500 15q0 7 5.500 7t5.500-7" fill="none" stroke="#fff" strokeWidth="1.800" /><path d="M5 12h3l2-4 3 8 2-5 1 1h3" fill="none" stroke="#8b5cf6" strokeWidth="1.800" /></> },
  { name: 'PDF', icon: <><rect x=".5" width="23" height="24" rx="5" fill="#4b7df3" /><text x="12" y="19" fontSize="19" fontWeight="700" textAnchor="middle" fill="#e8efff">P</text></> },
  { name: 'AnyDesk', open: true, icon: <><path d="M0 0h24v24H0z" fill="#f23b30" /><path d="M9 6l6 6-6 6-6-6zM13 6l2 0 6 6-6 6h-2l6-6z" fill="#fff" /></> },
];

function Taskbar() {
  return (
    <div className="flex h-10 shrink-0 items-stretch bg-[linear-gradient(90deg,#1b1f24_0%,#1b1f24_22%,#182048_33%,#17204a_50%,#161a24_56%,#1a2048_60%,#1a1c22_66%,#1d1d1f_72%,#1c2030_77%,#33363b_86%,#434146_100%)] text-white">
      {apps.map((app) => (
        <button
          key={app.name}
          type="button"
          aria-label={app.name}
          className={clsx('flex w-[49px] shrink-0 flex-col items-center', app.active && 'bg-[#4b4e55]')}
        >
          <span className="flex h-[38px] items-center pt-px"><svg width="24" height="24" viewBox="0 0 24 24">{app.icon}</svg></span>
          {(app.active || app.open) && <span className={clsx('h-[2px] bg-[#76b9ed]', app.active ? 'w-full' : 'w-10')} />}
        </button>
      ))}
      <div className="ml-auto flex items-center">
        <svg width="14" height="8" viewBox="0 0 14 8" fill="none" stroke="#fff" strokeWidth="1.200"><path d="M1 7l6-6 6 6" /></svg>
        <svg width="12" height="16" viewBox="0 0 12 16" fill="none" stroke="#fff" className="ml-3"><path d="M1.500 4.500h7v7h-7zM8.500 7l2.500-1.500v5L8.500 9M2 2q3-2 6 0M2 14q3 2 6 0" /></svg>
        <svg width="16" height="14" viewBox="0 0 16 14" fill="none" stroke="#fff" className="ml-2"><path d="M6 2.500h9.500v8H3V6M.5.5h4v5h-4zM8 10.500v3M5 13.500h7" /></svg>
        <svg width="17" height="14" viewBox="0 0 17 14" fill="none" stroke="#fff" className="ml-2"><path d="M1 5h2.500l3-3.500v11l-3-3.500H1zM9 5q1.500 2 0 4M11 3q3 4 0 8M13.500 1.500q4 5.500 0 11" /></svg>
        <span className="ml-2 text-[12px]">ENG</span>
        <div className="ml-2 w-[72px] text-center text-[12px] leading-[18px]">
          <div>8:23 PM</div>
          <div>2/19/2026</div>
        </div>
        <svg width="16" height="16" viewBox="0 0 16 16" fill="none" stroke="#fff" strokeWidth="1.200" className="ml-4"><path d="M.6 1h14.800v11h-5L8 14.500 5.500 12H.6z" /></svg>
        <span className="mr-1 ml-5 h-10 w-px bg-[#77767a]" />
      </div>
    </div>
  );
}

function Watermark() {
  return (
    <div className="pointer-events-none absolute bottom-0 left-[854px] flex w-[214px] flex-col items-center text-[#d9d9d9]/80 select-none">
      <span dir="rtl" className="text-[64px] leading-[80px] font-bold whitespace-nowrap">نفـذلي</span>
      <span className="text-[33px] leading-[40px] font-bold text-[#e0e0e0]/85">nafezly.com</span>
    </div>
  );
}

export default function App() {
  return (
    <div className="relative flex h-screen flex-col overflow-hidden bg-[#f3f2f1] font-['Noto_Sans','DejaVu_Sans',sans-serif]">
      <TitleBar />
      <RibbonTabs />
      <Ribbon />
      <FormulaBar />
      <Sheet />
      <SheetTabs />
      <StatusBar />
      <Taskbar />
      <Watermark />
    </div>
  );
}
